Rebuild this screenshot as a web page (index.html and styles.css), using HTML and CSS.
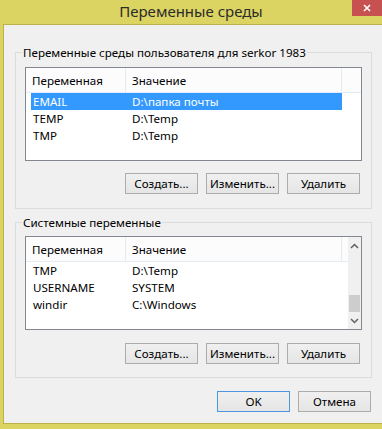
FILE: index.html
```html
<!DOCTYPE html>
<html lang="ru">
<head>
    <meta charset="UTF-8">
    <meta name="viewport" content="width=device-width, initial-scale=1.0">
    <title>Переменные среды</title>
    <link rel="stylesheet" href="styles.css">
</head>
<body>
    <div class="window">
        <div class="titlebar">
            <span class="title">Переменные среды</span>
            <div class="close-btn">
                <svg viewBox="0 0 8 8" width="8" height="8">
                    <path d="M1 1l6 6M7 1l-6 6"></path>
                </svg>
            </div>
        </div>

        <div class="client">
            <!-- user variables -->
            <div class="group">
                <span class="group-label">Переменные среды пользователя для serkor 1983</span>
                <div class="listview">
                    <div class="lv-main">
                        <div class="lv-header">
                            <div class="lv-col col-name">Переменная</div>
                            <div class="lv-col col-value">Значение</div>
                            <div class="lv-col col-rest"></div>
                        </div>
                        <div class="lv-row selected"><span class="cell-name">EMAIL</span><span class="cell-value">D:\папка почты</span></div>
                        <div class="lv-row"><span class="cell-name">TEMP</span><span class="cell-value">D:\Temp</span></div>
                        <div class="lv-row"><span class="cell-name">TMP</span><span class="cell-value">D:\Temp</span></div>
                    </div>
                </div>
                <div class="btn-row">
                    <button class="btn">Создать...</button>
                    <button class="btn">Изменить...</button>
                    <button class="btn">Удалить</button>
                </div>
            </div>

            <!-- system variables -->
            <div class="group group-system">
                <span class="group-label">Системные переменные</span>
                <div class="listview">
                    <div class="lv-main">
                        <div class="lv-header">
                            <div class="lv-col col-name">Переменная</div>
                            <div class="lv-col col-value">Значение</div>
                            <div class="lv-col col-rest"></div>
                        </div>
                        <div class="lv-row"><span class="cell-name">TMP</span><span class="cell-value">D:\Temp</span></div>
                        <div class="lv-row"><span class="cell-name">USERNAME</span><span class="cell-value">SYSTEM</span></div>
                        <div class="lv-row"><span class="cell-name">windir</span><span class="cell-value">C:\Windows</span></div>
                    </div>
                    <div class="scrollbar">
                        <div class="sb-arrow">
                            <svg viewBox="0 0 9 6" width="9" height="6"><path d="M1 5l3.5-3.5L8 5"></path></svg>
                        </div>
                        <div class="sb-track"><div class="sb-thumb"></div></div>
                        <div class="sb-arrow">
                            <svg viewBox="0 0 9 6" width="9" height="6"><path d="M1 1l3.5 3.5L8 1"></path></svg>
                        </div>
                    </div>
                </div>
                <div class="btn-row">
                    <button class="btn">Создать...</button>
                    <button class="btn">Изменить...</button>
                    <button class="btn">Удалить</button>
                </div>
            </div>

            <div class="dialog-buttons">
                <button class="btn btn-default">OK</button>
                <button class="btn">Отмена</button>
            </div>
        </div>
    </div>
</body>
</html>
```

FILE: styles.css
```css
* {
    margin: 0;
    padding: 0;
    box-sizing: border-box;
}

body {
    font-family: "Noto Sans", "Open Sans", sans-serif;
    font-size: 11.6px;
    color: #000;
    background: #dbd462;
}

.window {
    width: 382px;
    height: 429px;
    display: flex;
    flex-direction: column;
    background: #dbd462;
    overflow: hidden;
}

.titlebar {
    height: 24px;
    display: grid;
    grid-template-columns: 1fr auto 1fr;
    align-items: start;
}

.title {
    grid-column: 2;
    font-size: 15px;
    line-height: 23px;
    color: #2b2b2b;
}

.close-btn {
    grid-column: 3;
    justify-self: end;
    width: 30px;
    height: 16px;
    background: #c75050;
    display: flex;
    align-items: center;
    justify-content: center;
}

.close-btn svg {
    stroke: #fff;
    stroke-width: 1.6;
    fill: none;
}

.client {
    flex: 1;
    margin: 0 0 5px 3px;
    border: 1px solid #bcb24c;
    border-right: none;
    background: #f0f0f0;
    padding: 27px 10px 0 11px;
    display: flex;
    flex-direction: column;
}

.group {
    position: relative;
    border: 1px solid #dcdcdc;
    padding: 14px 9px 14px 9px;
}

.group-system {
    margin-top: 13px;
    padding: 13px 9px 13px 9px;
}

.group-label {
    position: absolute;
    top: -8px;
    left: 6px;
    padding: 0 1px;
    line-height: 15px;
    background: #f0f0f0;
}

.listview {
    height: 94px;
    border: 1px solid #828790;
    background: #fff;
    display: flex;
}

.lv-main {
    flex: 1;
}

.lv-header {
    height: 25px;
    display: flex;
    background: #fcfcfd;
    border-bottom: 1px solid #e5ebf3;
}

.lv-col {
    padding-left: 6px;
    line-height: 25px;
    border-right: 1px solid #e5ebf3;
}

.col-name {
    width: 100px;
}

.col-value {
    width: 216px;
}

.col-rest {
    flex: 1;
    border-right: none;
}

.lv-row {
    display: flex;
    width: 311px;
    height: 17px;
    margin-left: 5px;
    line-height: 17px;
}

.lv-row.selected {
    background: #3399ff;
    color: #fff;
}

.cell-name {
    width: 95px;
    padding-left: 2px;
}

.cell-value {
    padding-left: 6px;
}

.scrollbar {
    width: 17px;
    display: flex;
    flex-direction: column;
    background: #f0f0f0;
}

.sb-arrow {
    height: 17px;
    display: flex;
    align-items: center;
    justify-content: center;
}

.sb-arrow svg {
    stroke: #606060;
    stroke-width: 1.5;
    fill: none;
}

.sb-track {
    flex: 1;
    display: flex;
    flex-direction: column;
    justify-content: flex-end;
}

.sb-thumb {
    height: 17px;
    margin: 0 1px;
    background: #cdcdcd;
}

.btn-row {
    margin-top: 12px;
    margin-right: 2px;
    display: flex;
    justify-content: flex-end;
    gap: 8px;
}

.group-system .btn-row {
    margin-top: 13px;
}

.btn {
    width: 73px;
    height: 21px;
    font-family: inherit;
    font-size: 11.6px;
    color: #000;
    background: linear-gradient(#f0f0f0, #e5e5e5);
    border: 1px solid #acacac;
}

.btn-default {
    border-color: #4d97e0;
}

.dialog-buttons {
    margin-top: 13px;
    margin-right: 1px;
    display: flex;
    justify-content: flex-end;
    gap: 8px;
}
```
